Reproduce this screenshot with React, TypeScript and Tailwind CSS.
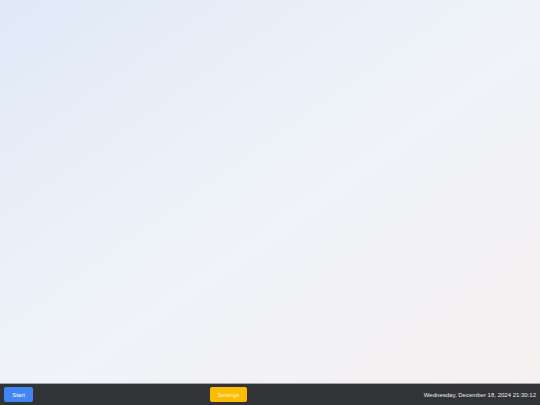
import React from "react";

export default function App() {
  return (
    <div
      className="flex h-[405px] w-[540px] flex-col overflow-hidden"
      style={{ fontFamily: '"Liberation Sans", Arial, sans-serif' }}
    >
      <div className="flex-1 bg-gradient-to-br from-[#e0e9f7] via-[#eff3f9] to-[#f6f0f0]" />
      <div className="flex h-[22px] items-center justify-between border-t border-[#a4a6aa] bg-[#323336] px-1">
        <button className="flex h-[15px] w-[29px] items-center justify-center rounded-[2px] bg-[#4285f4] text-[6px] leading-none text-white">
          Start
        </button>
        <button className="flex h-[15px] w-[37px] items-center justify-center rounded-[2px] bg-[#fbbc05] text-[6px] leading-none text-[#fff4cc]">
          Settings
        </button>
        <div className="text-[6px] leading-none text-[#ececec]">
          Wednesday, December 18, 2024 21:30:12
        </div>
      </div>
    </div>
  );
}
